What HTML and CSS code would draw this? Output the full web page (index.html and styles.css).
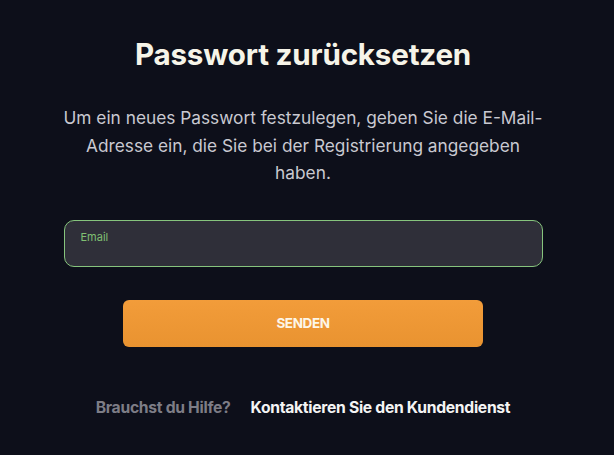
FILE: index.html
```html
<!DOCTYPE html>
<html lang="de">
<head>
    <meta charset="UTF-8">
    <title>Passwort zurücksetzen</title>
    <link rel="stylesheet" href="styles.css">
</head>
<body>
<div class="page">
    <h1 class="title">Passwort zurücksetzen</h1>
    <p class="intro">Um ein neues Passwort festzulegen, geben Sie die E-Mail-Adresse ein, die Sie bei der Registrierung angegeben haben.</p>
    <div class="field">
        <label class="field_label" for="email">Email</label>
        <input class="field_input" id="email" type="email">
    </div>
    <button class="send" type="button">SENDEN</button>
    <div class="help">
        <span class="help_q">Brauchst du Hilfe?</span>
        <a class="help_link" href="#">Kontaktieren Sie den Kundendienst</a>
    </div>
</div>
</body>
</html>
```

FILE: styles.css
```css
html, body {
    margin: 0;
    padding: 0;
    background: #0d0f1a;
}

body {
    font-family: Inter, "Open Sans", sans-serif;
    width: 614px;
    height: 455px;
    overflow: hidden;
}

.page {
    display: flex;
    flex-direction: column;
    align-items: center;
    padding: 34px 8px 0 0;
}

.title {
    margin: 0;
    font-size: 29.6px;
    font-weight: 700;
    line-height: 40px;
    color: #f6f4e8;
    letter-spacing: -0.2px;
}

.intro {
    margin: 30px 0 0;
    width: 485px;
    text-align: center;
    font-size: 17.3px;
    line-height: 27.5px;
    color: #c9c9d1;
}

.field {
    margin-top: 33px;
    width: 479px;
    height: 47px;
    box-sizing: border-box;
    border: 1px solid #86c47d;
    border-radius: 10px;
    background: #2f2f39;
    display: flex;
    flex-direction: column;
    padding: 0 16px;
}

.field_label {
    font-size: 11px;
    color: #7fbf72;
    padding-top: 9px;
    line-height: 14px;
}

.field_input {
    background: transparent;
    border: none;
    outline: none;
    color: #fff;
    font-size: 14px;
    padding: 0;
}

.send {
    margin-top: 33px;
    width: 360px;
    height: 47px;
    border: none;
    border-radius: 6px;
    background: linear-gradient(#f29c3a, #e99330);
    color: #fdf6e8;
    font-family: Inter, sans-serif;
    font-weight: 700;
    font-size: 13.5px;
    letter-spacing: -0.4px;
}

.help {
    margin-top: 52px;
    display: flex;
    gap: 20px;
    font-size: 15.7px;
    line-height: 18px;
    font-weight: 700;
    letter-spacing: -0.3px;
}

.help_q {
    color: #7d7d86;
}

.help_link {
    color: #f4f4f4;
    text-decoration: none;
}
```
